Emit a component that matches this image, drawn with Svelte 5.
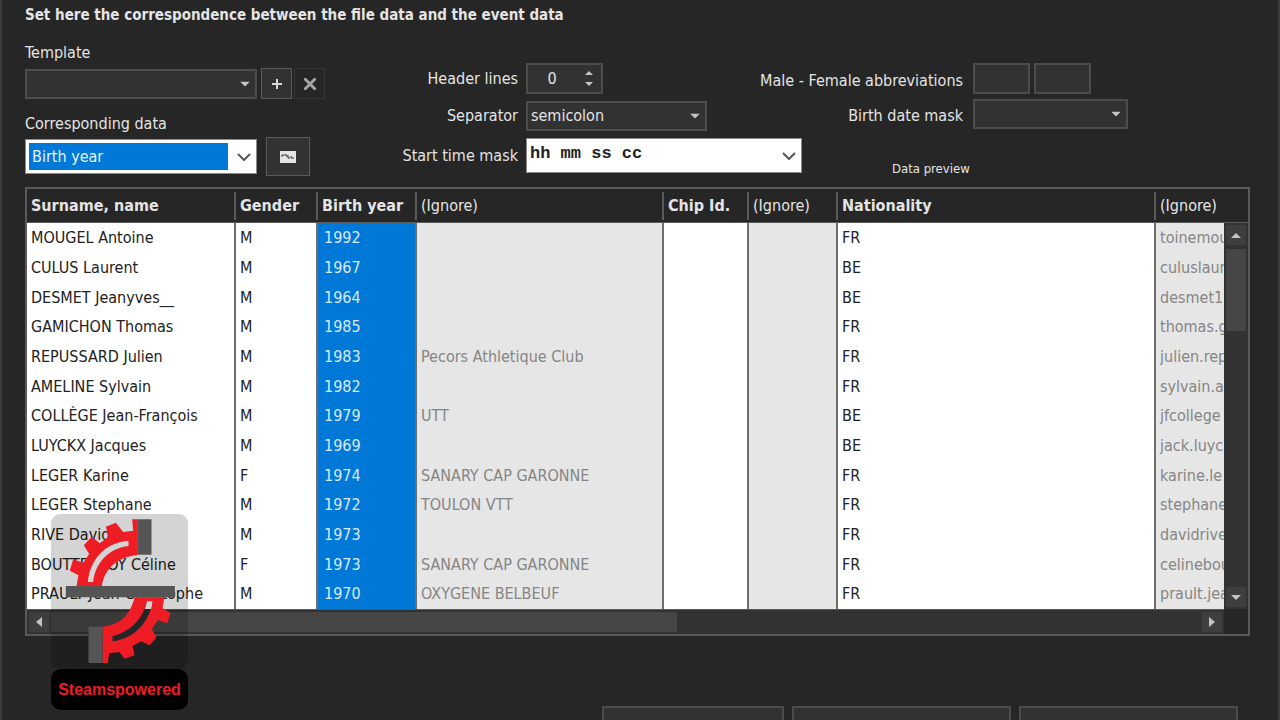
<script lang="ts">
    interface Column {
        title: string;
        kind: "mapped" | "selected" | "ignored";
        width?: number;
    }

    const columns: Column[] = [
        { title: "Surname, name", kind: "mapped", width: 207 },
        { title: "Gender", kind: "mapped", width: 82 },
        { title: "Birth year", kind: "selected", width: 99 },
        { title: "(Ignore)", kind: "ignored", width: 247 },
        { title: "Chip Id.", kind: "mapped", width: 85 },
        { title: "(Ignore)", kind: "ignored", width: 89 },
        { title: "Nationality", kind: "mapped" },
        { title: "(Ignore)", kind: "ignored", width: 94 },
    ];

    const rows: string[][] = [
        ["MOUGEL Antoine", "M", "1992", "", "", "", "FR", "toinemou"],
        ["CULUS Laurent", "M", "1967", "", "", "", "BE", "culuslaur"],
        ["DESMET Jeanyves__", "M", "1964", "", "", "", "BE", "desmet1."],
        ["GAMICHON Thomas", "M", "1985", "", "", "", "FR", "thomas.g"],
        ["REPUSSARD Julien", "M", "1983", "Pecors Athletique Club", "", "", "FR", "julien.rep"],
        ["AMELINE Sylvain", "M", "1982", "", "", "", "FR", "sylvain.a"],
        ["COLLÈGE Jean-François", "M", "1979", "UTT", "", "", "BE", "jfcollege"],
        ["LUYCKX Jacques", "M", "1969", "", "", "", "BE", "jack.luyc"],
        ["LEGER Karine", "F", "1974", "SANARY CAP GARONNE", "", "", "FR", "karine.le"],
        ["LEGER Stephane", "M", "1972", "TOULON VTT", "", "", "FR", "stephane"],
        ["RIVE David", "M", "1973", "", "", "", "FR", "davidrive"],
        ["BOUTTEFROY Céline", "F", "1973", "SANARY CAP GARONNE", "", "", "FR", "celinebou"],
        ["PRAULT Jean-Christophe", "M", "1970", "OXYGENE BELBEUF", "", "", "FR", "prault.jea"],
    ];

    let headerLines = $state(0);
    let male = $state("");
    let female = $state("");
</script>

{#snippet triangle()}
    <svg class="triangle" viewBox="0 0 10 5" aria-hidden="true"><path d="M0 0h10L5 5z" /></svg>
{/snippet}

{#snippet chevron()}
    <svg class="chevron" viewBox="0 0 14 8" aria-hidden="true"><path d="M1 1l6 6 6-6" /></svg>
{/snippet}

<main class="dialog">
    <h1>Set here the correspondence between the file data and the event data</h1>

    <form class="settings">
        <div class="source">
            <label for="template">Template</label>
            <div class="line">
                <div class="combo wide">
                    <select id="template"><option></option></select>
                    {@render triangle()}
                </div>
                <button class="tool" type="button" aria-label="Add template">
                    <svg viewBox="0 0 12 12" aria-hidden="true"><path d="M6 1v10M1 6h10" /></svg>
                </button>
                <button class="tool muted" type="button" aria-label="Delete template">
                    <svg viewBox="0 0 12 12" aria-hidden="true"><path d="M0 0l12 12M12 0L0 12" /></svg>
                </button>
            </div>

            <label class="second" for="field">Corresponding data</label>
            <div class="line">
                <div class="combo light wide focused">
                    <select id="field"><option>Birth year</option></select>
                    {@render chevron()}
                </div>
                <button class="tool card" type="button" aria-label="Field details">
                    <svg viewBox="0 0 16 12" aria-hidden="true">
                        <rect width="16" height="12" />
                        <path d="M2 6V4h5v2M8 4v3h2M11 5v2h3" />
                    </svg>
                </button>
            </div>
        </div>

        <div class="format">
            <label for="header-lines">Header lines</label>
            <div class="spin">
                <input id="header-lines" type="text" inputmode="numeric" bind:value={headerLines} />
                <div class="arrows">
                    <button type="button" aria-label="More" onclick={() => headerLines++}>
                        <svg viewBox="0 0 8 4" aria-hidden="true"><path d="M0 4h8L4 0z" /></svg>
                    </button>
                    <button type="button" aria-label="Less" onclick={() => headerLines--}>
                        <svg viewBox="0 0 8 4" aria-hidden="true"><path d="M0 0h8L4 4z" /></svg>
                    </button>
                </div>
            </div>

            <label for="separator">Separator</label>
            <div class="combo medium">
                <select id="separator"><option>semicolon</option></select>
                {@render triangle()}
            </div>

            <label for="time-mask">Start time mask</label>
            <div class="combo light mask">
                <select id="time-mask"><option>hh mm ss cc</option></select>
                {@render chevron()}
            </div>
        </div>

        <div class="athlete">
            <label for="male">Male - Female abbreviations</label>
            <div class="pair">
                <input id="male" type="text" bind:value={male} />
                <input type="text" aria-label="Female abbreviation" bind:value={female} />
            </div>

            <label for="date-mask">Birth date mask</label>
            <div class="combo small">
                <select id="date-mask"><option></option></select>
                {@render triangle()}
            </div>

            <p class="caption">Data preview</p>
        </div>
    </form>

    <section class="preview" aria-label="Data preview">
        <table>
            <colgroup>
                {#each columns as column}
                    <col style:width={column.width ? `${column.width}px` : null} />
                {/each}
            </colgroup>
            <thead>
                <tr>
                    {#each columns as column}
                        <th class={column.kind} scope="col"><span>{column.title}</span></th>
                    {/each}
                </tr>
            </thead>
            <tbody>
                {#each rows as row}
                    <tr>
                        {#each row as cell, i}
                            <td class={columns[i].kind}>{cell}</td>
                        {/each}
                    </tr>
                {/each}
            </tbody>
        </table>

        <div class="scroll-y">
            <button type="button" aria-label="Scroll up">
                <svg viewBox="0 0 10 5" aria-hidden="true"><path d="M0 5h10L5 0z" /></svg>
            </button>
            <div class="thumb"></div>
            <button type="button" aria-label="Scroll down">
                <svg viewBox="0 0 10 5" aria-hidden="true"><path d="M0 0h10L5 5z" /></svg>
            </button>
        </div>

        <div class="scroll-x">
            <button type="button" aria-label="Scroll left">
                <svg viewBox="0 0 6 10" aria-hidden="true"><path d="M6 0v10L0 5z" /></svg>
            </button>
            <div class="thumb"></div>
            <button type="button" aria-label="Scroll right">
                <svg viewBox="0 0 6 10" aria-hidden="true"><path d="M0 0v10l6-5z" /></svg>
            </button>
        </div>
    </section>

    <footer>
        <button type="button" aria-label="Back"></button>
        <button class="broad" type="button" aria-label="Import"></button>
        <button class="broad" type="button" aria-label="Cancel"></button>
    </footer>

    <aside class="brand">
        <svg viewBox="63 42 408 465" aria-hidden="true">
            <path
                class="gear"
                d="M320 58H305L308 92 278 96 256 68 226 80 234 110 208 130 184 110 160 136 176 162 158 188 128 178 118 212 144 226 138 258H214C222 206 262 170 320 166Z"
            />
            <path class="slot" d="M172 246C178 182 220 128 294 122V138C236 144 194 188 188 246Z" />
            <path
                class="gear"
                d="M312 292C300 346 266 376 216 380V489H232L236 460 266 456 282 476 312 466 306 438 332 424 358 436 378 412 364 388 382 360 410 370 420 340 396 324 402 292Z"
            />
            <path class="slot-dark" d="M349 304C340 352 300 398 246 408V424C310 418 358 366 366 304Z" />
            <path class="slot" d="M349 304C348 312 346 320 343 327H362C364 320 365 312 366 304Z" />
            <path class="plate" d="M320 58h43v106h-43zM106 258h327v34H106zM174 380h42v109h-42z" />
        </svg>
        <strong>Steamspowered</strong>
    </aside>
</main>

<style>
    :global(body) {
        overflow: hidden;
        background: #262626;
    }

    .dialog {
        position: relative;
        box-sizing: border-box;
        height: 100vh;
        overflow: hidden;
        padding: 4px 28px 0 23px;
        border-right: 2px solid #3a3a3a;
        border-left: 2px solid #3a3a3a;
        background: #262626;
        color: #e4e4e4;
        font-family: "DejaVu Sans Condensed", "DejaVu Sans", sans-serif;
        font-size: 16px;
        line-height: 22px;
    }

    h1 {
        margin: 0;
        font-size: 15px;
        font-weight: 700;
    }

    button,
    input,
    select {
        box-sizing: border-box;
        margin: 0;
        padding: 0;
        border: 1px solid #5a5a5a;
        border-radius: 0;
        background: #323232;
        color: #e4e4e4;
        font: inherit;
    }

    svg {
        display: block;
        fill: #c4c4c4;
    }

    .settings {
        display: flex;
        height: 161px;
    }

    .source {
        display: flex;
        flex-direction: column;
        width: 301px;
        padding-top: 16px;
    }

    .source .second {
        margin-top: 14px;
    }

    .line {
        display: flex;
        align-items: center;
        gap: 4px;
        margin-top: 4px;
    }

    .combo {
        position: relative;
        box-sizing: border-box;
        height: 30px;
        border: 2px solid #4c4c4c;
        background: #323232;
    }

    .combo select {
        width: 100%;
        height: 100%;
        padding: 0 24px 0 3px;
        border: 0;
        appearance: none;
    }

    .combo svg {
        position: absolute;
        top: 50%;
        right: 5px;
        transform: translateY(-50%);
        pointer-events: none;
    }

    .triangle {
        width: 10px;
        height: 5px;
    }

    .chevron {
        width: 14px;
        height: 8px;
        fill: none;
        stroke: #555;
        stroke-width: 2;
    }

    .wide {
        width: 232px;
    }

    .medium {
        width: 181px;
    }

    .small {
        width: 155px;
    }

    .light {
        height: 35px;
        border: 1px solid #8a8a8a;
        background: #fff;
    }

    .light select {
        background: #fff;
        color: #222;
    }

    .focused {
        padding: 3px 28px 3px 3px;
    }

    .focused select {
        background: #0078d7;
        color: #e8f2fc;
    }

    /* runs on under the shorter fields of the next group */
    .mask {
        width: 276px;
        margin-right: -60px;
    }

    .mask select {
        padding-bottom: 3px;
        font-family: "Liberation Mono", monospace;
        font-size: 17px;
        font-weight: 700;
    }

    .tool {
        display: grid;
        place-items: center;
        width: 31px;
        height: 31px;
    }

    .tool svg {
        width: 12px;
        height: 12px;
        stroke: #d8d8d8;
        stroke-width: 2;
    }

    .tool.muted {
        margin-left: -2px;
        border-color: #363636;
        background: #262626;
    }

    .tool.muted svg {
        stroke: #a4a4a4;
        stroke-width: 3;
    }

    .tool.card {
        width: 44px;
        height: 39px;
        margin: -2px 0 -2px 5px;
    }

    .tool.card svg {
        width: 16px;
        height: 12px;
        fill: #e4e4e4;
        stroke: none;
    }

    .tool.card path {
        fill: none;
        stroke: #333;
        stroke-width: 1;
    }

    .format,
    .athlete {
        display: grid;
        align-items: center;
        justify-items: start;
        align-content: start;
    }

    .format {
        grid-template-columns: 191px auto;
        gap: 7px 8px;
        padding: 37px 0 0 1px;
    }

    .athlete {
        grid-template-columns: 1fr auto;
        gap: 5px 10px;
        flex: 1;
        padding: 37px 122px 0 0;
    }

    .format label,
    .athlete label {
        justify-self: end;
        white-space: nowrap;
    }

    .athlete label {
        padding-top: 4px;
    }

    .spin {
        display: flex;
        box-sizing: border-box;
        width: 77px;
        height: 31px;
        border: 2px solid #4c4c4c;
        background: #323232;
    }

    .spin input {
        width: 48px;
        border: 0;
        text-align: center;
    }

    .arrows {
        display: flex;
        flex: 1;
        flex-direction: column;
        justify-content: space-evenly;
        align-items: center;
    }

    .arrows button {
        border: 0;
    }

    .arrows svg {
        width: 8px;
        height: 4px;
    }

    .pair {
        display: flex;
        gap: 4px;
    }

    .pair input {
        width: 57px;
        height: 31px;
        border: 2px solid #4c4c4c;
    }

    .caption {
        grid-column: 1 / -1;
        margin: 24px 0 0 150px;
        font-size: 13px;
    }

    .preview {
        position: relative;
        border: 2px solid #5a5a5a;
    }

    table {
        width: 100%;
        table-layout: fixed;
        border-collapse: separate;
        border-spacing: 0;
    }

    th {
        height: 33px;
        padding: 0;
        border-bottom: 1px solid #5a5a5a;
        text-align: left;
        white-space: nowrap;
    }

    th span {
        display: block;
        padding: 3px 0 3px 4px;
        border-left: 2px solid #5a5a5a;
    }

    th:first-child span {
        border-left: 0;
    }

    th.ignored {
        font-weight: 400;
    }

    td {
        box-sizing: border-box;
        height: 30px;
        padding: 0 0 0 4px;
        overflow: hidden;
        border-left: 2px solid #6e6e6e;
        background: #fff;
        color: #222;
        white-space: nowrap;
    }

    tr:nth-child(3n) td {
        height: 29px;
    }

    td:first-child {
        border-left: 0;
    }

    td.selected {
        padding-left: 6px;
        background: #0078d7;
        color: #d8eafa;
    }

    td.ignored {
        background: #e6e6e6;
        color: #858585;
    }

    .scroll-y {
        position: absolute;
        top: 34px;
        right: 0;
        bottom: 25px;
        display: flex;
        flex-direction: column;
        width: 24px;
        background: #323232;
    }

    .scroll-y button,
    .scroll-x button {
        display: grid;
        place-items: center;
        width: 24px;
        height: 24px;
        border: 2px solid #323232;
        background: #3e3e3e;
    }

    .scroll-y svg {
        width: 10px;
        height: 5px;
    }

    .scroll-y .thumb {
        height: 82px;
        margin: 2px 2px auto;
        background: #464646;
    }

    .scroll-x {
        display: flex;
        height: 24px;
        margin-right: 24px;
        border-top: 1px solid #5a5a5a;
        background: #323232;
    }

    .scroll-x svg {
        width: 6px;
        height: 10px;
    }

    .scroll-x .thumb {
        width: 626px;
        margin: 2px auto 2px 0;
        background: #464646;
    }

    footer {
        display: flex;
        justify-content: flex-end;
        gap: 8px;
        margin-top: 70px;
        padding-right: 12px;
    }

    footer button {
        width: 182px;
        height: 36px;
        border: 2px solid #4c4c4c;
    }

    footer .broad {
        width: 219px;
    }

    .brand {
        position: absolute;
        bottom: 10px;
        left: 49px;
        width: 137px;
    }

    .brand svg {
        width: 137px;
        height: 155px;
        border-radius: 9px;
        background: rgba(0, 0, 0, 0.17);
    }

    .gear {
        fill: #ee1c25;
    }

    .slot {
        fill: #d4d4d4;
    }

    .slot-dark {
        fill: #262626;
    }

    .plate {
        fill: #555;
    }

    .brand strong {
        display: block;
        border-radius: 10px;
        background: #000;
        color: #ee1c25;
        font-family: "Liberation Sans", sans-serif;
        font-size: 16px;
        line-height: 41px;
        text-align: center;
    }
</style>
